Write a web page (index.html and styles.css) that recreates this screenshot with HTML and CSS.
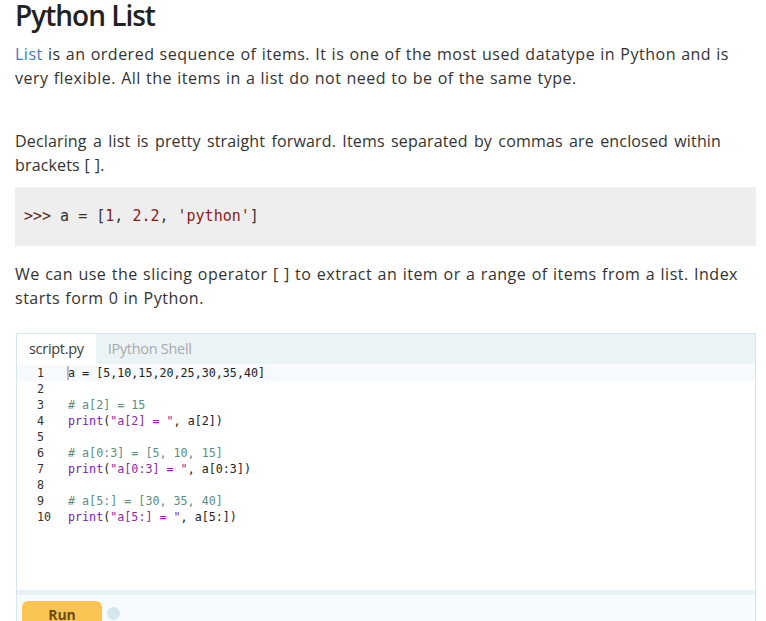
FILE: index.html
```html
<!DOCTYPE html>
<html>
<head>
<meta charset="utf-8">
<link rel="stylesheet" href="styles.css">
</head>
<body>
<div class="page">
  <h1 class="title">Python List</h1>
  <p class="para p1"><a class="link" href="#">List</a> is an ordered sequence of items. It is one of the most used datatype in Python and is very flexible. All the items in a list do not need to be of the same type.</p>
  <p class="para p2">Declaring a list is pretty straight forward. Items separated by commas are enclosed within brackets [ ].</p>
  <pre class="snippet"><span class="prompt">&gt;&gt;&gt;</span> a = [<span class="num">1</span>, <span class="num">2.2</span>, <span class="str">'python'</span>]</pre>
  <p class="para p3">We can use the slicing operator [ ] to extract an item or a range of items from a list. Index starts form 0 in Python.</p>

  <div class="editor">
    <div class="tabs">
      <div class="tab active">script.py</div>
      <div class="tab">IPython Shell</div>
    </div>
    <div class="code">
      <div class="line current"><span class="ln">1</span><span class="src"><span class="cursor"></span>a = [5,10,15,20,25,30,35,40]</span></div>
      <div class="line"><span class="ln">2</span><span class="src"></span></div>
      <div class="line"><span class="ln">3</span><span class="src"><span class="cm"># a[2] = 15</span></span></div>
      <div class="line"><span class="ln">4</span><span class="src"><span class="kw">print</span>(<span class="s">"a[2] = "</span>, a[2])</span></div>
      <div class="line"><span class="ln">5</span><span class="src"></span></div>
      <div class="line"><span class="ln">6</span><span class="src"><span class="cm"># a[0:3] = [5, 10, 15]</span></span></div>
      <div class="line"><span class="ln">7</span><span class="src"><span class="kw">print</span>(<span class="s">"a[0:3] = "</span>, a[0:3])</span></div>
      <div class="line"><span class="ln">8</span><span class="src"></span></div>
      <div class="line"><span class="ln">9</span><span class="src"><span class="cm"># a[5:] = [30, 35, 40]</span></span></div>
      <div class="line"><span class="ln">10</span><span class="src"><span class="kw">print</span>(<span class="s">"a[5:] = "</span>, a[5:])</span></div>
    </div>
    <div class="divider"></div>
    <div class="footer">
      <button class="run">Run</button>
      <span class="dot"></span>
    </div>
  </div>
</div>
</body>
</html>
```

FILE: styles.css
```css
html, body {
  margin: 0;
  padding: 0;
  background: #fff;
  overflow: hidden;
}
body {
  font-family: "Open Sans", "Noto Sans", sans-serif;
  color: #333;
}
.page {
  padding: 0 10px 0 15px;
}
.title {
  margin: -1px 0 0;
  font-size: 28px;
  font-weight: 600;
  color: #222;
  line-height: 32px;
  letter-spacing: -1px;
}
.para {
  font-size: 16px;
  line-height: 24px;
  margin: 0;
  text-align: justify;
  color: #333;
  letter-spacing: 0.5px;
  word-spacing: 0.5px;
}
.p1 {
  margin-top: 11px;
  width: 714px;
}
.p2 {
  margin-top: 39px;
  width: 706px;
  letter-spacing: 0.15px;
}
.p3 {
  margin-top: 16px;
  width: 723px;
}
.link {
  color: #3b7bbf;
  text-decoration: none;
}
.snippet {
  margin: 10px 0 16px;
  background: #eee;
  height: 59px;
  box-sizing: border-box;
  padding: 19px 9px 0;
  font-family: "DejaVu Sans Mono", monospace;
  font-size: 15px;
  line-height: 20px;
  color: #333;
}
.prompt { color: #5a2a1a; }
.num { color: #8b1a1a; }
.str { color: #8b1a1a; }

.editor {
  margin-top: 23px;
  margin-left: 1px;
  border: 1px solid #d4e7ef;
  border-bottom: none;
  height: 300px;
  box-sizing: border-box;
  display: flex;
  flex-direction: column;
}
.tabs {
  display: flex;
  height: 30px;
  background: #eaf3f6;
}
.tab {
  padding: 0 12px;
  font-size: 14.5px;
  line-height: 30px;
  color: #aaa;
  letter-spacing: -0.3px;
}
.tab.active {
  background: #fff;
  color: #3a3a3a;
}
.code {
  height: 226px;
  padding-top: 1px;
  box-sizing: border-box;
  background: #fff;
  font-family: "DejaVu Sans Mono", monospace;
  font-size: 11.7px;
  color: #222;
}
.line {
  display: flex;
  height: 16px;
  line-height: 16px;
}
.line.current {
  background: #f6fafc;
}
.ln {
  width: 51px;
  padding-left: 20px;
  box-sizing: border-box;
  color: #333;
}
.src {
  position: relative;
  white-space: pre;
}
.cursor {
  position: absolute;
  left: -1px;
  top: 1px;
  width: 2px;
  height: 14px;
  background: #bbb;
}
.cm { color: #5b8f80; }
.kw { color: #7d12c9; }
.s { color: #8a2a9e; }
.divider {
  height: 5px;
  background: #e6f1f5;
}
.footer {
  flex: 1;
  background: #f6fbfd;
  display: flex;
  align-items: flex-start;
  padding: 6px 0 0 5px;
  gap: 5px;
}
.run {
  width: 80px;
  height: 28px;
  border: none;
  border-radius: 6px;
  background: #fcc553;
  color: #6b4c16;
  font-family: "Open Sans", sans-serif;
  font-weight: 700;
  font-size: 14px;
  padding: 0;
  line-height: 28px;
}
.dot {
  margin-top: 6px;
  width: 13px;
  height: 13px;
  border-radius: 50%;
  background: #d4e7ef;
}
```
